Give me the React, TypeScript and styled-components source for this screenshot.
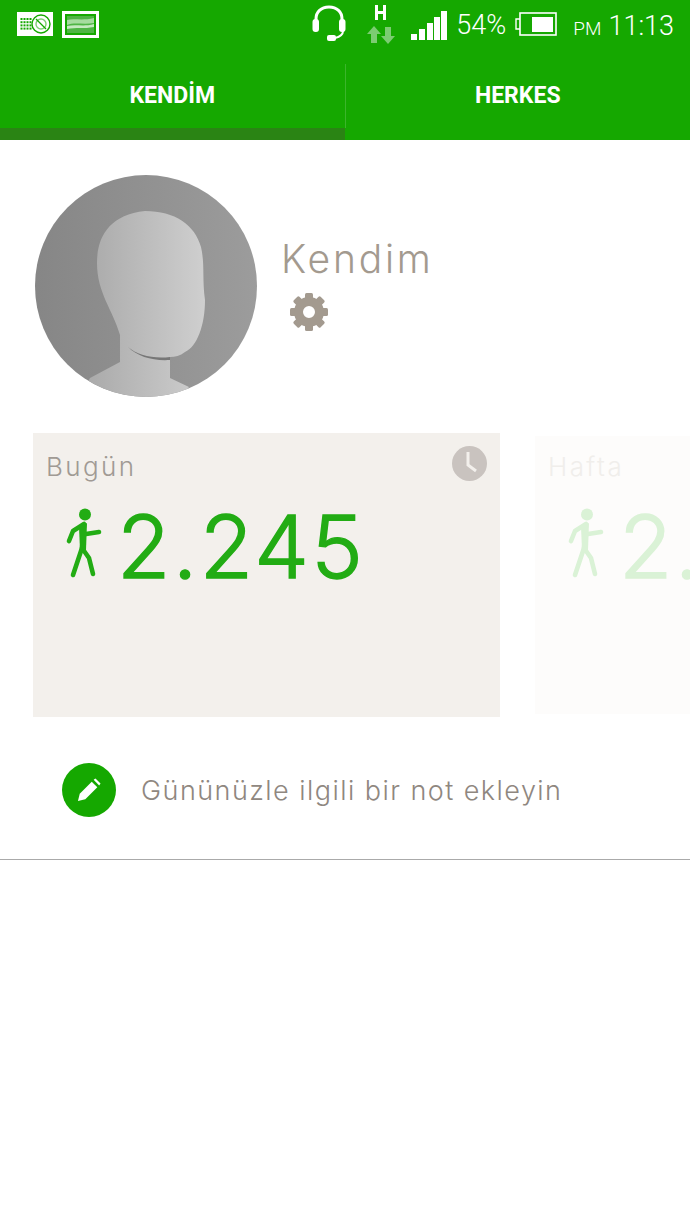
import React from "react";
import styled, { createGlobalStyle } from "styled-components";

const Global = createGlobalStyle`
  html, body { margin: 0; padding: 0; background: #fff; }
  body { width: 690px; height: 1227px; overflow: hidden; font-family: "Inter", "Liberation Sans", sans-serif; }
  * { box-sizing: border-box; }
`;
const Page = styled.div`width: 690px; height: 1227px; background: #fff; overflow: hidden;`;
const Header = styled.header`background: #15a800; height: 140px; display: flex; flex-direction: column;`;
const StatusBar = styled.div`height: 56px; display: flex; align-items: flex-start; padding: 0 16px 0 16px; color: #fff;`;
const StatusIcon = styled.svg<{ $ml?: number; $mt: number }>`
  display: block; flex: none; margin-left: ${(p) => p.$ml ?? 0}px; margin-top: ${(p) => p.$mt}px;
`;
const StatusText = styled.span<{ $ml: number; $size: number; $mt: number }>`
  font-family: "Roboto", sans-serif; font-weight: 300; font-size: ${(p) => p.$size}px; line-height: 28px;
  margin-left: ${(p) => p.$ml}px; margin-top: ${(p) => p.$mt}px; color: #fff; white-space: nowrap;
`;
const Spacer = styled.div`flex: 1;`;
const Tabs = styled.nav`flex: 1; display: flex;`;
const Tab = styled.div<{ $active?: boolean }>`
  flex: 1; display: flex; align-items: center; justify-content: center; padding-top: ${(p) => (p.$active ? 6 : 0)}px;
  padding-bottom: ${(p) => (p.$active ? 0 : 6)}px;
  color: #fff; font-family: "Roboto", sans-serif; font-weight: 700; font-size: 23px;
  border-bottom: ${(p) => (p.$active ? "12px solid #2a8414" : "0")};
`;
const TabDivider = styled.div`width: 1px; height: 64px; margin-top: 8px; background: #3cb52c; flex: none;`;
const Profile = styled.section`display: flex; align-items: flex-start; padding: 35px 0 0 35px; height: 293px;`;
const Avatar = styled.svg`display: block; width: 222px; height: 222px; flex: none;`;
const ProfileInfo = styled.div`margin-left: 24px; padding-top: 61px; display: flex; flex-direction: column;`;
const Name = styled.h1`
  margin: 0; font-family: "Inter", sans-serif; font-weight: 300; font-size: 39px; line-height: 46px; letter-spacing: 2.8px; color: #a39a8f;
`;
const Gear = styled.svg`display: block; width: 40px; height: 40px; margin: 10px 0 0 8px;`;
const Carousel = styled.section`display: flex; align-items: center; padding-left: 33px; gap: 35px; height: 284px; overflow: hidden;`;
const Card = styled.article<{ $ghost?: boolean }>`
  flex: none; position: relative; width: 467px; height: ${(p) => (p.$ghost ? 278 : 284)}px;
  background: ${(p) => (p.$ghost ? "#fdfcfb" : "#f3f0ec")}; padding: ${(p) => (p.$ghost ? 16 : 19)}px 0 0 13px;
`;
const CardLabel = styled.div<{ $ghost?: boolean }>`
  font-family: "Inter", sans-serif; font-weight: 300; font-size: 26px; line-height: 30px; letter-spacing: 2.4px;
  color: ${(p) => (p.$ghost ? "#f0eeeb" : "#a09a94")};
`;
const StepRow = styled.div`display: flex; align-items: flex-start; margin: 26px 0 0 20px;`;
const Walker = styled.svg`display: block; width: 38px; height: 72px; flex: none;`;
const Steps = styled.div<{ $ghost?: boolean }>`
  margin-left: 13px; margin-top: 1px; font-family: "Inter", sans-serif; font-weight: 300; font-size: 87px; line-height: 76px; letter-spacing: 2.4px;
  color: ${(p) => (p.$ghost ? "#daf2d6" : "#22ac14")}; white-space: nowrap; -webkit-text-stroke: 1.4px currentColor;
`;
const ClockBadge = styled.svg`position: absolute; top: 13px; right: 13px; width: 35px; height: 35px;`;
const NoteRow = styled.section`display: flex; align-items: center; margin-top: 46px; padding-left: 62px; height: 54px;`;
const NoteButton = styled.div`
  width: 54px; height: 54px; border-radius: 50%; background: #15a800; display: flex; align-items: center; justify-content: center; flex: none;
`;
const NoteText = styled.div`
  margin-left: 25px; font-family: "Inter", sans-serif; font-weight: 300; font-size: 27px; letter-spacing: 1.45px; color: #8f8780; white-space: nowrap;
`;
const Rule = styled.hr`margin: 42px 0 0; border: 0; height: 1px; background: #aaa;`;

const WalkerIcon = ({ color }: { color: string }) => (
  <Walker viewBox="0 0 38 72" fill="none">
    <circle cx="19" cy="6.5" r="6" fill={color} />
    <g stroke={color} strokeWidth="4.6" strokeLinecap="round" strokeLinejoin="round">
      <path d="M3 33 L7 23 L18 16 L16 40 L23 50 L27 66" />
      <path d="M16 40 L7 67" />
      <path d="M20 26 L33 24" />
    </g>
    <path d="M13 19 L21 15 L20 42 L14 42 Z" fill={color} />
  </Walker>
);

export default function App() {
  return (
    <Page>
      <Global />
      <Header>
        <StatusBar>
          <StatusIcon width="36" height="24" viewBox="0 0 36 24" $ml={1} $mt={12}>
            <rect width="36" height="24" fill="#fff" />
            <g fill="#15a800">
              {[0, 1, 2, 3].flatMap((r) =>
                [0, 1, 2, 3].map((c) => <rect key={`${r}-${c}`} x={3.5 + c * 3} y={6 + r * 3.2} width="2" height="2" />)
              )}
            </g>
            <circle cx="24" cy="12" r="9" fill="none" stroke="#15a800" strokeWidth="1.4" />
            <circle cx="24" cy="12" r="5" fill="none" stroke="#7fcf76" strokeWidth="1.4" />
            <path d="M19 7 L29 17" stroke="#15a800" strokeWidth="1.2" />
          </StatusIcon>
          <StatusIcon width="37" height="27" viewBox="0 0 37 27" $ml={9} $mt={11}>
            <rect x="1.5" y="1.5" width="34" height="24" fill="#15a800" stroke="#fff" strokeWidth="3" />
            <rect x="5" y="5" width="27" height="17" fill="#4fb545" />
            <path d="M5 9 C12 7 20 10 32 7 V12 C22 14 12 11 5 14 Z" fill="#a6dc9f" />
            <path d="M5 15 C14 13 22 16 32 13 V16 C22 18 14 16 5 18 Z" fill="#c5e9c0" />
          </StatusIcon>
          <Spacer />
          <StatusIcon width="34" height="36" viewBox="0 0 34 36" fill="none" $ml={0} $mt={5}>
            <path d="M4 17 V14 C4 7 9 2 17 2 C25 2 30 7 30 14 V17" stroke="#fff" strokeWidth="3" />
            <rect x="0.5" y="14" width="6.5" height="13" rx="3" fill="#fff" />
            <rect x="27" y="14" width="6.5" height="13" rx="3" fill="#fff" />
            <path d="M31 26 C31 30 27 32 23 33" stroke="#fff" strokeWidth="2" />
            <rect x="15" y="30" width="9" height="6" rx="2" fill="#fff" />
          </StatusIcon>
          <StatusIcon width="30" height="40" viewBox="0 0 30 40" $ml={20} $mt={4}>
            <path d="M9 1 H12 V7 H17 V1 H20 V16 H17 V10 H12 V16 H9 Z" fill="#fff" />
            <path d="M8 22 L15 30 H11 V39 H5 V30 H1 Z" fill="#7ccc72" />
            <path d="M19 23 H25 V32 H29 L22 40 L15 32 H19 Z" fill="#7ccc72" />
          </StatusIcon>
          <StatusIcon width="36" height="29" viewBox="0 0 36 29" $ml={15} $mt={11} fill="#fff">
            <rect x="0" y="23" width="6" height="6" />
            <rect x="8" y="18" width="6" height="11" />
            <rect x="16" y="12" width="6" height="17" />
            <rect x="23" y="6" width="6" height="23" />
            <rect x="30" y="0" width="6" height="29" />
          </StatusIcon>
          <StatusText $ml={9} $size={27} $mt={11}>54%</StatusText>
          <StatusIcon width="43" height="24" viewBox="0 0 43 24" fill="none" $ml={8} $mt={12}>
            <path d="M6 7 H2 V17 H6" stroke="#fff" strokeWidth="1.4" />
            <rect x="6" y="1" width="36" height="22" stroke="#fff" strokeWidth="1.6" />
            <rect x="18" y="5" width="21" height="15" fill="#fff" />
          </StatusIcon>
          <StatusText $ml={16} $size={19} $mt={15}>PM</StatusText>
          <StatusText $ml={7} $size={27} $mt={12}>11:13</StatusText>
        </StatusBar>
        <Tabs>
          <Tab $active>KENDİM</Tab>
          <TabDivider />
          <Tab>HERKES</Tab>
        </Tabs>
      </Header>
      <Profile>
        <Avatar viewBox="0 0 222 222">
          <defs>
            <linearGradient id="bg" x1="0" x2="1">
              <stop offset="0" stopColor="#868686" />
              <stop offset="1" stopColor="#9c9c9c" />
            </linearGradient>
            <linearGradient id="face" x1="0" x2="1">
              <stop offset="0" stopColor="#a6a6a6" />
              <stop offset="1" stopColor="#cfcfcf" />
            </linearGradient>
            <clipPath id="disc"><circle cx="111" cy="111" r="111" /></clipPath>
          </defs>
          <circle cx="111" cy="111" r="111" fill="url(#bg)" />
          <path
            clipPath="url(#disc)"
            d="M62 88 C62 62 74 40 110 36 C140 36 160 50 166 72 C170 90 167 102 170 125 C170 150 162 172 150 177 C145 181 140 182 135 182 L135 203 L154 212 L140 230 L40 230 L55 203 L85 187 L85 160 C78 135 62 118 62 88 Z"
            fill="url(#face)"
          />
          <path d="M93 172 C102 180 118 184 135 182 L135 185 C118 186 103 182 93 172 Z" fill="#777" />
        </Avatar>
        <ProfileInfo>
          <Name>Kendim</Name>
          <Gear viewBox="0 0 40 40">
            <g fill="#a39a8f">
              {[0, 45, 90, 135, 180, 225, 270, 315].map((a) => (
                <rect key={a} x="16" y="1" width="8" height="8" rx="1.5" transform={`rotate(${a} 20 20)`} />
              ))}
            </g>
            <circle cx="20" cy="20" r="10.5" fill="none" stroke="#a39a8f" strokeWidth="9" />
          </Gear>
        </ProfileInfo>
      </Profile>
      <Carousel>
        <Card>
          <CardLabel>Bugün</CardLabel>
          <StepRow>
            <WalkerIcon color="#22ac14" />
            <Steps>2.245</Steps>
          </StepRow>
          <ClockBadge viewBox="0 0 35 35">
            <circle cx="17.5" cy="17.5" r="17.5" fill="#c9c3bf" />
            <path d="M16 6 V19 L24 25" fill="none" stroke="#f3f0ec" strokeWidth="3" />
          </ClockBadge>
        </Card>
        <Card $ghost>
          <CardLabel $ghost>Hafta</CardLabel>
          <StepRow>
            <WalkerIcon color="#daf2d6" />
            <Steps $ghost>2.245</Steps>
          </StepRow>
        </Card>
      </Carousel>
      <NoteRow>
        <NoteButton>
          <svg width="24" height="24" viewBox="0 0 26 26">
            <path d="M1 25 L3 17 L16 4 L22 10 L9 23 Z" fill="#fff" />
            <path d="M18 2 L20 0.5 L25.5 6 L24 8 Z" fill="#fff" />
          </svg>
        </NoteButton>
        <NoteText>Gününüzle ilgili bir not ekleyin</NoteText>
      </NoteRow>
      <Rule />
    </Page>
  );
}
